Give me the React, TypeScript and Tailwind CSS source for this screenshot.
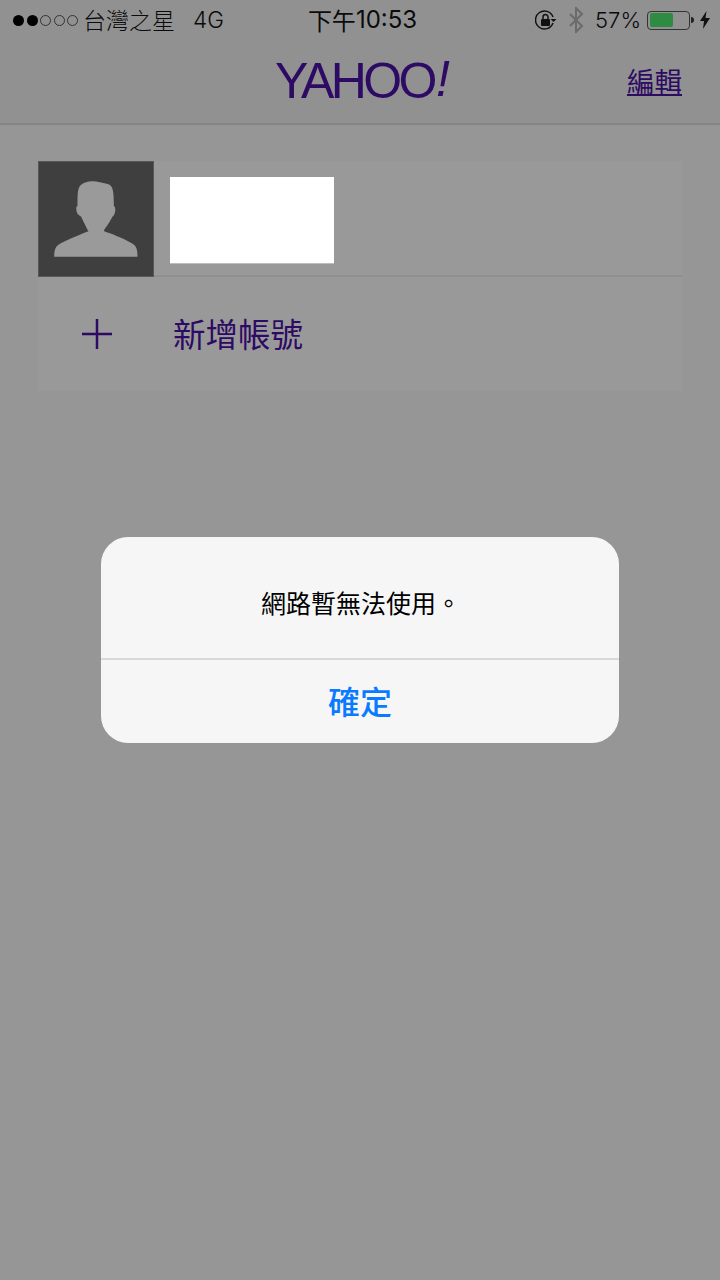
import React from "react";

const cjk = '"Noto Sans CJK TC","Noto Sans",sans-serif';

function Dot({ on }: { on: boolean }) {
  return on ? (
    <span className="w-[11px] h-[11px] rounded-full bg-black" />
  ) : (
    <span className="w-[11px] h-[11px] rounded-full border border-[#333]" />
  );
}

function StatusBar() {
  return (
    <div className="relative h-[40px] flex items-center justify-between pl-[13px] pr-[9px] text-[#0b0b0b]" style={{ fontFamily: cjk }}>
      <div className="flex items-center">
        <div className="flex gap-[2.5px] items-center">
          <Dot on /><Dot on /><Dot on={false} /><Dot on={false} /><Dot on={false} />
        </div>
        <span className="ml-[5px] text-[23px] leading-none font-light -translate-y-px">台灣之星</span>
        <span className="ml-[18px] text-[22.500px] leading-none font-['Inter'] font-light">4G</span>
      </div>
      <div className="absolute left-0 right-0 top-0 h-[40px] flex items-center justify-center pl-[5px] text-[24px]">
        <span className="font-['Noto_Sans_CJK_TC'] leading-none">下午</span>
        <span className="font-['Inter'] leading-none font-normal text-[24px]">10:53</span>
      </div>
      <div className="flex items-center">
        <svg width="22" height="20" viewBox="0 0 22 20" className="mr-[11px]">
          <path d="M18 7A9 9 0 1 0 18 13" fill="none" stroke="#111" strokeWidth="1.5" />
          <path d="M15.5 9h6l-3 3z" fill="#111" />
          <rect x="6" y="9" width="9" height="7" rx="1" fill="#111" />
          <path d="M8 9V7a2.5 2.5 0 0 1 5 0v2" fill="none" stroke="#111" strokeWidth="1.5" />
        </svg>
        <svg width="16" height="26" viewBox="0 0 16 26" className="mr-[11px]">
          <path d="M2 7l12 12-6 6V1l6 6L2 19" fill="none" stroke="#6b6b6b" strokeWidth="2" />
        </svg>
        <span className="text-[22px] leading-none font-['Inter'] font-light mr-[6px]">57%</span>
        <div className="w-[43px] h-[19px] rounded-[4px] border border-[#333] p-[1.5px]">
          <div className="w-[23px] h-full rounded-[2px] bg-[#2e8b41]" />
        </div>
        <span className="ml-[1px] w-[3px] h-[6px] rounded-r-full bg-[#222]" />
        <svg width="12" height="18" viewBox="0 0 12 18" className="ml-[5px]">
          <path d="M7.5 0L1 10h4l-1 8 7-11H6.5z" fill="#111" />
        </svg>
      </div>
    </div>
  );
}

function Person() {
  return (
    <svg width="84" height="76" viewBox="102 93 251 228">
      <path
        d="M200 96C215 90 250 98 268 104C278 110 281 125 281 168C288 170 286 190 280 197C275 200 270 215 262 225C255 235 250 240 252 244C270 250 310 265 335 280C348 288 352 295 352 320L102 320C102 295 108 288 122 280C150 265 185 252 205 244C200 235 190 215 183 200C172 195 166 185 169 170L172 168C172 130 172 115 182 105C187 100 195 98 200 96Z"
        fill="#9a9a9a"
      />
    </svg>
  );
}

export default function App() {
  return (
    <div className="relative w-[720px] h-[1280px] overflow-hidden bg-[#969696]">
      <div className="bg-[#919192] h-[125px] border-b-2 border-[#858585]">
        <StatusBar />
        <div className="relative h-[83px] flex items-start justify-end pr-[38px]">
          <div className="absolute left-[275px] top-[13px] h-[56px] flex items-center text-[#2d0a63]">
            <span className="font-['Liberation_Sans'] text-[50px] tracking-[-3.6px] leading-none">YAHOO</span>
            <span className="font-['Liberation_Sans'] text-[50px] italic leading-none ml-[2px] -translate-y-[2px]">!</span>
          </div>
          <span className="mt-[22px] text-[27.500px] leading-[36px] underline text-[#2d0a63]" style={{ fontFamily: cjk }}>編輯</span>
        </div>
      </div>

      <div className="mx-[38px] mt-[36px] bg-[#999999]">
        <div className="h-[116px] flex border-b-2 border-[#8f8f8f]">
          <div className="w-[116px] h-[116px] bg-[#3f3f3f] border border-[#575757] flex items-center justify-center shrink-0">
            <Person />
          </div>
          <div className="ml-[16px] mt-[16px] w-[164px] h-[87px] bg-white border-b border-[#bdbdbd]" />
        </div>
        <div className="h-[114px] flex items-center">
          <svg width="30" height="30" viewBox="0 0 30 30" className="ml-[44px]">
            <path d="M0 15h30M15 0v30" stroke="#2d0a63" strokeWidth="2.500" />
          </svg>
          <span className="ml-[61px] text-[32.500px] leading-none text-[#2d0a63] font-normal -translate-y-px" style={{ fontFamily: cjk }}>新增帳號</span>
        </div>
      </div>

      <div className="absolute left-[101px] top-[537px] w-[518px] h-[206px] rounded-[27px] bg-[#f6f6f6] flex flex-col" style={{ fontFamily: cjk }}>
        <div className="h-[123px] pt-[11px] pl-[2px] flex items-center justify-center border-b-2 border-[#d9d9d9] text-[25px] text-black font-normal">
          網路暫無法使用。
        </div>
        <div className="flex-1 pb-[3px] flex items-center justify-center text-[32px] font-medium text-[#0a7aff]">確定</div>
      </div>
    </div>
  );
}
